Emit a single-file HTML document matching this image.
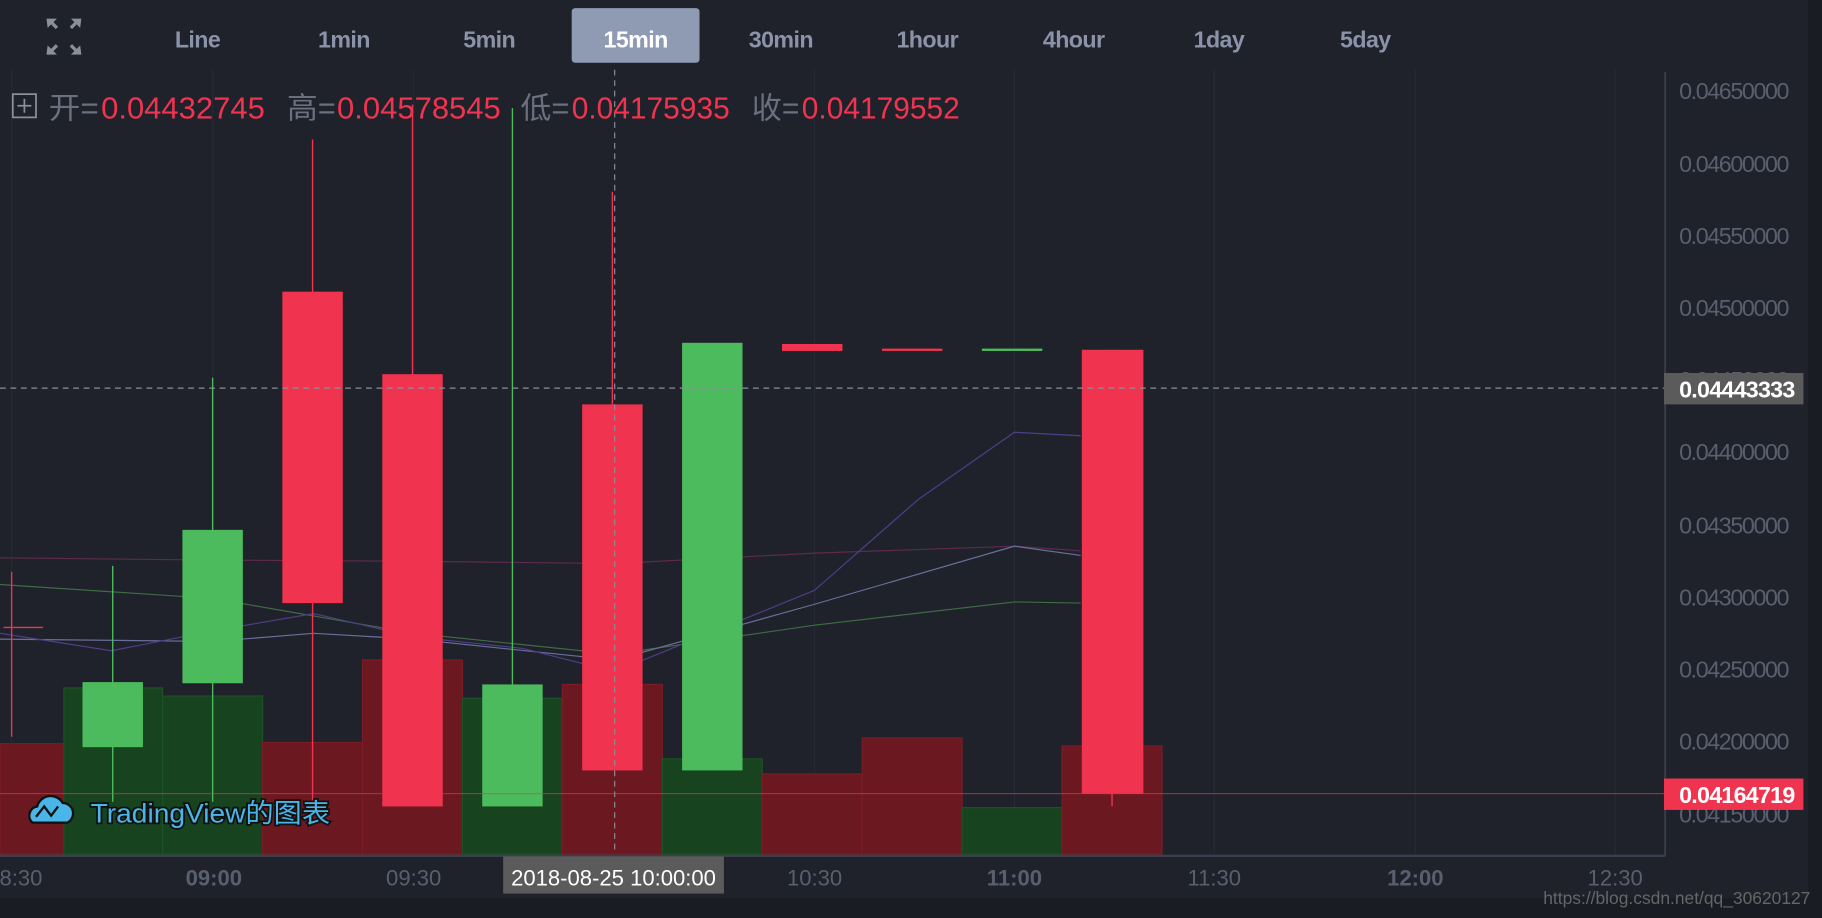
<!DOCTYPE html>
<html><head><meta charset="utf-8"><style>
html,body{margin:0;padding:0;background:#1f222b;overflow:hidden}
svg{display:block}
text{font-family:"Liberation Sans","Noto Sans CJK SC",sans-serif}
</style></head><body>
<svg width="1822" height="918" viewBox="0 0 1568 790" xmlns="http://www.w3.org/2000/svg">
<rect width="1568" height="790" fill="#1f222b"/>
<rect x="1556" y="0" width="12" height="790" fill="#1a1c23"/>
<rect x="0" y="773" width="1568" height="17" fill="#1a1c23"/>
<!-- grid -->
<g stroke="#262a36" stroke-width="1">
<line x1="10" y1="60" x2="10" y2="735"/><line x1="183" y1="60" x2="183" y2="735"/><line x1="356" y1="60" x2="356" y2="735"/><line x1="701" y1="60" x2="701" y2="735"/><line x1="873" y1="60" x2="873" y2="735"/><line x1="1045" y1="60" x2="1045" y2="735"/><line x1="1218" y1="60" x2="1218" y2="735"/><line x1="1390" y1="60" x2="1390" y2="735"/>
</g>
<!-- top bar -->
<g fill="#8a8f98">
<path d="M40 16h9l-3 3 4 4-2 2-4-4-3 3z"/><path d="M70 16h-9l3 3-4 4 2 2 4-4 3 3z"/>
<path d="M40 47h9l-3-3 4-4-2-2-4 4-3-3z"/><path d="M70 47h-9l3-3-4-4 2-2 4 4 3-3z"/>
</g>
<rect x="492" y="7" width="110" height="47" rx="3" fill="#8f9bb3"/>
<g font-size="20" font-weight="bold" fill="#8a93a8" text-anchor="middle" letter-spacing="-0.5">
<text x="170" y="41">Line</text><text x="296" y="41">1min</text><text x="421" y="41">5min</text><text x="547" y="41" fill="#fff">15min</text><text x="672" y="41">30min</text><text x="798" y="41">1hour</text><text x="924" y="41">4hour</text><text x="1049" y="41">1day</text><text x="1175" y="41">5day</text>
</g>
<!-- volume -->
<g stroke-width="1">
<rect x="0" y="640" width="55" height="95" fill="#6b1820" stroke="#7a1d26"/>
<rect x="55" y="592" width="85" height="143" fill="#17441f" stroke="#1d5226"/>
<rect x="140" y="599" width="86" height="136" fill="#17441f" stroke="#1d5226"/>
<rect x="226" y="639" width="86" height="96" fill="#6b1820" stroke="#7a1d26"/>
<rect x="312" y="568" width="86" height="167" fill="#6b1820" stroke="#7a1d26"/>
<rect x="398" y="601" width="86" height="134" fill="#17441f" stroke="#1d5226"/>
<rect x="484" y="589" width="86" height="146" fill="#6b1820" stroke="#7a1d26"/>
<rect x="570" y="653" width="86" height="82" fill="#17441f" stroke="#1d5226"/>
<rect x="656" y="666" width="86" height="69" fill="#6b1820" stroke="#7a1d26"/>
<rect x="742" y="635" width="86" height="100" fill="#6b1820" stroke="#7a1d26"/>
<rect x="828" y="695" width="86" height="40" fill="#17441f" stroke="#1d5226"/>
<rect x="914" y="642" width="86" height="93" fill="#6b1820" stroke="#7a1d26"/>
</g>
<!-- MA lines -->
<g fill="none" stroke-width="1">
<polyline stroke="#5e2a4e" points="0,480 183,482 356,483 529,485 701,476 873,470 930,474"/>
<polyline stroke="#3f6b45" points="0,503 183,515 356,545 529,563 701,538 873,518 930,519"/>
<polyline stroke="#6a6f9a" points="0,550 183,552 270,545 356,550 529,568 701,520 873,470 930,478"/>
<polyline stroke="#4f3f8a" points="0,545 96,560 183,543 270,528 356,548 450,558 529,578 701,508 790,430 873,372 930,375"/>
</g>
<!-- candles -->
<g stroke-width="1.2">
<line x1="10" y1="492" x2="10" y2="634" stroke="#f0344f"/><line x1="3" y1="540" x2="37" y2="540" stroke="#f0344f"/>
<line x1="97" y1="487" x2="97" y2="690" stroke="#4cbb5e"/><rect x="71" y="587" width="52" height="56" fill="#4cbb5e"/>
<line x1="183" y1="325" x2="183" y2="690" stroke="#4cbb5e"/><rect x="157" y="456" width="52" height="132" fill="#4cbb5e"/>
<line x1="269" y1="120" x2="269" y2="690" stroke="#f0344f"/><rect x="243" y="251" width="52" height="268" fill="#f0344f"/>
<line x1="355" y1="90" x2="355" y2="694" stroke="#f0344f"/><rect x="329" y="322" width="52" height="372" fill="#f0344f"/>
<line x1="441" y1="93" x2="441" y2="694" stroke="#4cbb5e"/><rect x="415" y="589" width="52" height="105" fill="#4cbb5e"/>
<line x1="527" y1="165" x2="527" y2="663" stroke="#f0344f"/><rect x="501" y="348" width="52" height="315" fill="#f0344f"/>
<rect x="587" y="295" width="52" height="368" fill="#4cbb5e"/>
<rect x="673" y="296" width="52" height="6" fill="#f0344f"/>
<rect x="759" y="300" width="52" height="2" fill="#f0344f"/>
<rect x="845" y="300" width="52" height="2" fill="#4cbb5e"/>
<line x1="957" y1="301" x2="957" y2="694" stroke="#f0344f"/><rect x="931" y="301" width="53" height="382" fill="#f0344f"/>
</g>
<!-- crosshair & price lines -->
<line x1="529" y1="60" x2="529" y2="735" stroke="#8a8f98" stroke-dasharray="5,4"/>
<line x1="0" y1="334" x2="1432" y2="334" stroke="#8a8f98" stroke-dasharray="5,4"/>
<line x1="0" y1="683" x2="1432" y2="683" stroke="#f0344f" stroke-width="0.8" opacity="0.8"/>
<!-- legend -->
<rect x="11" y="81" width="20" height="20" fill="none" stroke="#8a8f98" stroke-width="1.5"/>
<line x1="21" y1="85" x2="21" y2="97" stroke="#8a8f98" stroke-width="1.5"/><line x1="15" y1="91" x2="27" y2="91" stroke="#8a8f98" stroke-width="1.5"/>
<g font-size="26" fill="#6b7080">
<text x="42" y="102" textLength="43" lengthAdjust="spacingAndGlyphs">开=</text>
<text x="87" y="102" fill="#f0344f" textLength="141" lengthAdjust="spacingAndGlyphs">0.04432745</text>
<text x="247" y="102" textLength="42" lengthAdjust="spacingAndGlyphs">高=</text>
<text x="290" y="102" fill="#f0344f" textLength="141" lengthAdjust="spacingAndGlyphs">0.04578545</text>
<text x="448" y="102" textLength="42" lengthAdjust="spacingAndGlyphs">低=</text>
<text x="492" y="102" fill="#f0344f" textLength="136" lengthAdjust="spacingAndGlyphs">0.04175935</text>
<text x="647" y="102" textLength="41" lengthAdjust="spacingAndGlyphs">收=</text>
<text x="690" y="102" fill="#f0344f" textLength="136" lengthAdjust="spacingAndGlyphs">0.04179552</text>
</g>
<!-- watermark -->
<path d="M28 708 h30 a9 9 0 0 0 -4 -17 a12 12 0 0 0 -22 3 a8 8 0 0 0 -4 14z" fill="#4ab6e8" stroke="#111" stroke-width="2"/>
<polyline points="31,703 38,694 44,702 50,694" fill="none" stroke="#111" stroke-width="2"/>
<text x="78" y="708" font-size="23" fill="#4ab6e8" stroke="#111" stroke-width="3" paint-order="stroke" textLength="206" lengthAdjust="spacingAndGlyphs">TradingView的图表</text>
<!-- axes -->
<line x1="1433" y1="62" x2="1433" y2="737" stroke="#3a3f4e" stroke-width="1.5"/>
<line x1="0" y1="736.5" x2="1433" y2="736.5" stroke="#3a3f4e" stroke-width="2"/>
<g font-size="20" fill="#5a5f70">
<text x="1445" y="85" textLength="95">0.04650000</text><text x="1445" y="148" textLength="95">0.04600000</text><text x="1445" y="210" textLength="95">0.04550000</text><text x="1445" y="272" textLength="95">0.04500000</text><text x="1445" y="334" textLength="95">0.04450000</text><text x="1445" y="396" textLength="95">0.04400000</text><text x="1445" y="459" textLength="95">0.04350000</text><text x="1445" y="521" textLength="95">0.04300000</text><text x="1445" y="583" textLength="95">0.04250000</text><text x="1445" y="645" textLength="95">0.04200000</text><text x="1445" y="708" textLength="95">0.04150000</text>
</g>
<rect x="1432" y="321" width="120" height="27" fill="#5b5b5b"/>
<text x="1445" y="342" font-size="20" font-weight="bold" fill="#fff" textLength="100">0.04443333</text>
<rect x="1432" y="670" width="120" height="27" fill="#f0344f"/>
<text x="1445" y="691" font-size="20" font-weight="bold" fill="#fff" textLength="100">0.04164719</text>
<g font-size="19" fill="#5a5f70" text-anchor="middle">
<text x="18" y="762">8:30</text><text x="184" y="762" font-weight="bold">09:00</text><text x="356" y="762">09:30</text><text x="701" y="762">10:30</text><text x="873" y="762" font-weight="bold">11:00</text><text x="1045" y="762">11:30</text><text x="1218" y="762" font-weight="bold">12:00</text><text x="1390" y="762">12:30</text>
</g>
<rect x="433" y="737" width="190" height="32" fill="#5b5b5b"/>
<text x="528" y="762" font-size="19" fill="#fff" text-anchor="middle">2018-08-25 10:00:00</text>
<text x="1558" y="778" font-size="15" fill="#666" text-anchor="end" font-family="Liberation Mono,monospace">https://blog.csdn.net/qq_30620127</text>
</svg>
</body></html>
